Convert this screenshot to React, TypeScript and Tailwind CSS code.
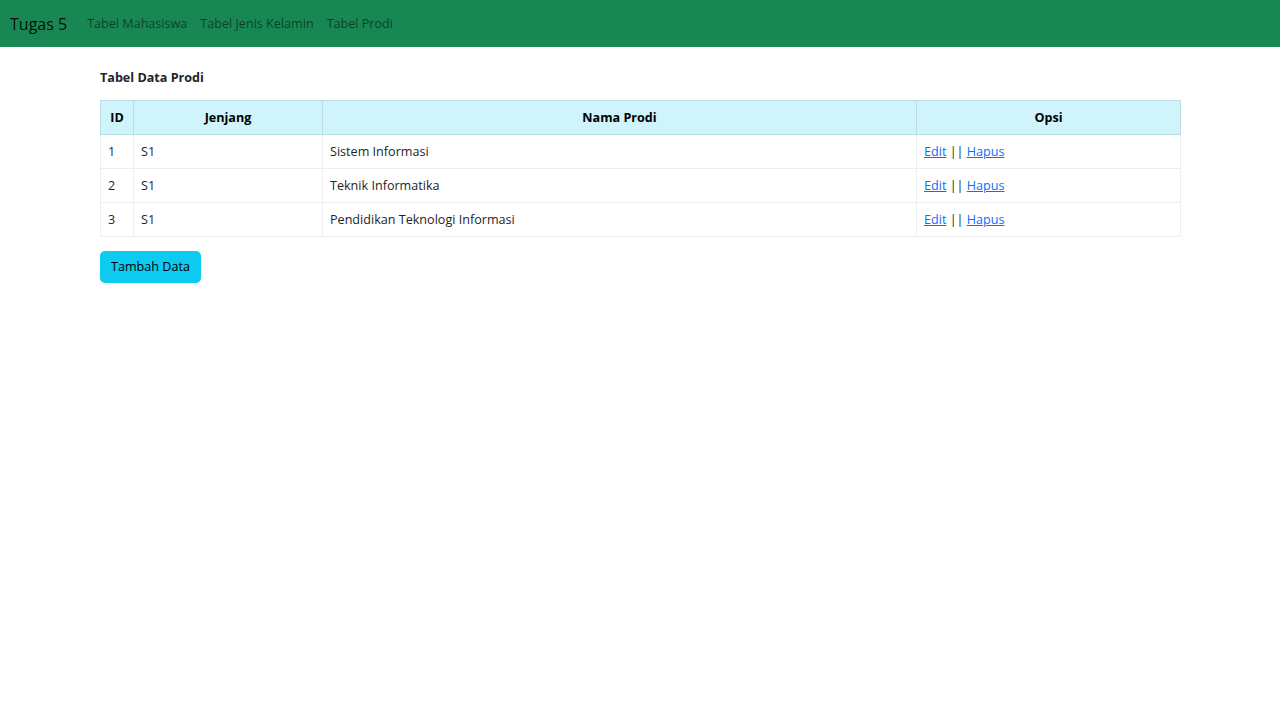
import React from "react";

const prodi = [
  { id: 1, jenjang: "S1", nama: "Sistem Informasi" },
  { id: 2, jenjang: "S1", nama: "Teknik Informatika" },
  { id: 3, jenjang: "S1", nama: "Pendidikan Teknologi Informasi" },
];

const App = () => {
  return (
    <div className="min-h-screen bg-white font-['Segoe_UI','Open_Sans',sans-serif] text-[12.6px] text-[#212529]">
      <nav className="flex h-[47px] items-center bg-[#198754] px-[10px] pt-[1px]">
        <span className="mr-[20px] text-[16px] text-black/90">Tugas 5</span>
        <div className="flex gap-[13px] text-[12.6px] text-black/55">
          <a href="#">Tabel Mahasiswa</a>
          <a href="#">Tabel Jenis Kelamin</a>
          <a href="#">Tabel Prodi</a>
        </div>
      </nav>

      <main className="mx-[100px] pt-[22px]">
        <h5 className="mb-[13px] text-[12.6px] font-bold leading-[18px]">Tabel Data Prodi</h5>

        <table className="w-[1080px] table-fixed border-collapse">
          <colgroup>
            <col className="w-[33px]" />
            <col className="w-[189px]" />
            <col className="w-[594px]" />
            <col className="w-[264px]" />
          </colgroup>
          <thead>
            <tr className="h-[34px] bg-[#cff4fc] text-black">
              <th className="border border-[#badce3] px-[6px] pt-[1px] font-bold">ID</th>
              <th className="border border-[#badce3] px-[7px] pt-[1px] font-bold">Jenjang</th>
              <th className="border border-[#badce3] px-[7px] pt-[1px] font-bold">Nama Prodi</th>
              <th className="border border-[#badce3] px-[7px] pt-[1px] font-bold">Opsi</th>
            </tr>
          </thead>
          <tbody>
            {prodi.map((p) => (
              <tr key={p.id} className="h-[34px]">
                <td className="border border-[#eceeef] px-[7px] pt-[2px]">{p.id}</td>
                <td className="border border-[#eceeef] px-[7px] pt-[2px]">{p.jenjang}</td>
                <td className="border border-[#eceeef] px-[7px] pt-[2px]">{p.nama}</td>
                <td className="border border-[#eceeef] px-[7px] pt-[2px]">
                  <a href="#" className="text-[#0d6efd] underline">Edit</a> ||{" "}
                  <a href="#" className="text-[#0d6efd] underline">Hapus</a>
                </td>
              </tr>
            ))}
          </tbody>
        </table>

        <button className="mt-[14px] h-[32px] rounded-[5px] bg-[#0dcaf0] px-[11px] text-[12.6px] text-black">
          Tambah Data
        </button>
      </main>
    </div>
  );
};

export default App;
